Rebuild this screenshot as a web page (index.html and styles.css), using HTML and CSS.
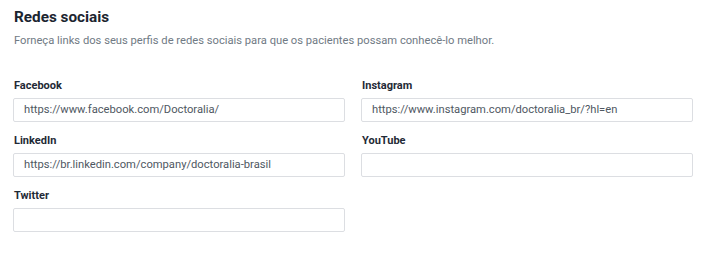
FILE: index.html
```html
<!DOCTYPE html>
<html lang="pt-BR">
<head>
<meta charset="utf-8">
<link rel="stylesheet" href="styles.css">
</head>
<body>
<section class="panel">
  <h2 class="title">Redes sociais</h2>
  <p class="subtitle">Forneça links dos seus perfis de redes sociais para que os pacientes possam conhecê-lo melhor.</p>
  <div class="grid">
    <div class="field">
      <label class="label">Facebook</label>
      <div class="input">https://www.facebook.com/Doctoralia/</div>
    </div>
    <div class="field">
      <label class="label">Instagram</label>
      <div class="input">https://www.instagram.com/doctoralia_br/?hl=en</div>
    </div>
    <div class="field">
      <label class="label">LinkedIn</label>
      <div class="input">https://br.linkedin.com/company/doctoralia-brasil</div>
    </div>
    <div class="field">
      <label class="label">YouTube</label>
      <div class="input"></div>
    </div>
    <div class="field">
      <label class="label">Twitter</label>
      <div class="input"></div>
    </div>
  </div>
</section>
</body>
</html>
```

FILE: styles.css
```css
* { box-sizing: border-box; }
html, body { margin: 0; padding: 0; background: #fff; }
body { font-family: Roboto, "Liberation Sans", Arial, sans-serif; }
.panel { padding: 7px 13px 0 13px; }
.title {
  margin: 0 0 0 1px;
  font-size: 15.3px;
  line-height: 20px;
  font-weight: 700;
  color: #1c2530;
}
.subtitle {
  margin: 6px 0 0 1px;
  font-size: 11.2px;
  line-height: 16px;
  color: #707a84;
}
.grid {
  margin-top: 30px;
  display: grid;
  grid-template-columns: 332px 332px;
  column-gap: 16px;
  row-gap: 12px;
}
.field { display: flex; flex-direction: column; }
.label {
  margin-left: 1px;
  font-size: 11px;
  line-height: 14px;
  font-weight: 700;
  color: #1f2a36;
  margin-bottom: 5px;
}
.input {
  height: 24px;
  border: 1px solid #dcdee2;
  border-radius: 2px;
  padding: 0 10px;
  font-size: 11.2px;
  line-height: 22px;
  color: #4f5862;
  white-space: nowrap;
  overflow: hidden;
}
```
